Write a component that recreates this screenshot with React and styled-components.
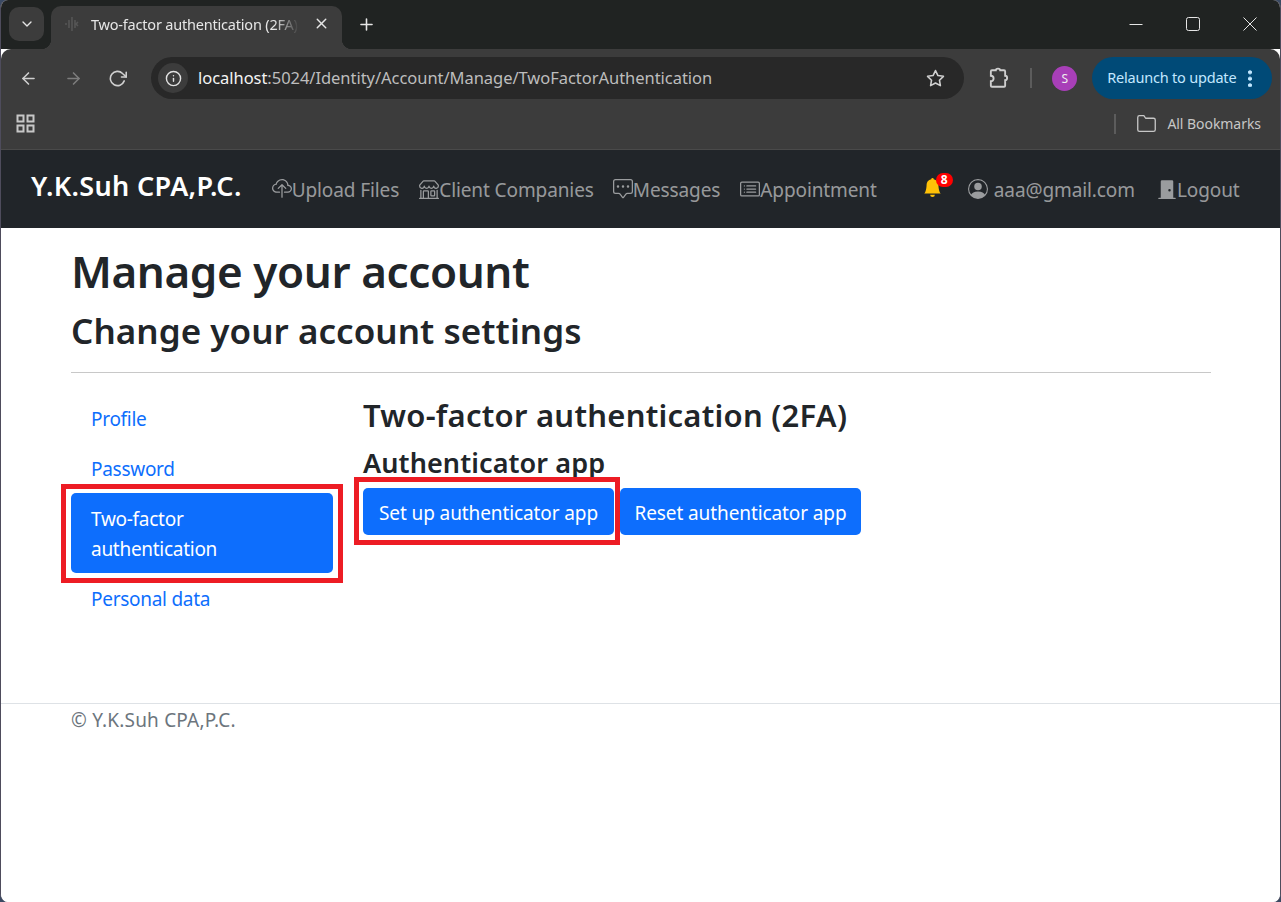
import React from "react";
import styled, { createGlobalStyle } from "styled-components";
import { FiArrowLeft, FiArrowRight, FiRotateCw, FiX, FiPlus, FiChevronDown, FiStar, FiFolder, FiInfo } from "react-icons/fi";
import { BsCloudUpload, BsShop, BsChatSquareDots, BsCardList, BsBellFill, BsPersonCircle, BsDoorClosedFill } from "react-icons/bs";

const GlobalStyle = createGlobalStyle`
  html, body { margin: 0; padding: 0; background: #3a4a63; }
  body { font-family: "Noto Sans", "Open Sans", sans-serif; }
  * { box-sizing: border-box; }
`;

const WindowFrame = styled.div`
  width: 1281px;
  height: 902px;
  background: #fff;
  border-radius: 8px;
  overflow: hidden;
  display: flex;
  flex-direction: column;
  border-left: 1px solid #4e4c5c;
  border-right: 1px solid #4e4c5c;
`;

const TabStrip = styled.div`
  height: 49px;
  flex: none;
  background: #202322;
  display: flex;
  align-items: flex-start;
  color: #e6e6e6;
  padding: 7px 0 0 8px;
`;

const TabSearch = styled.div`
  width: 35px;
  height: 34px;
  background: #3c3c3c;
  border-radius: 10px;
  display: flex;
  align-items: center;
  justify-content: center;
  font-size: 16px;
  margin-right: 7px;
`;

const Tab = styled.div`
  position: relative;
  width: 291px;
  height: 43px;
  margin-top: -1px;
  background: #3c3c3c;
  border-radius: 10px 10px 0 0;
  display: flex;
  align-items: center;
  padding: 0 12px 8px 12px;
  font-size: 14.5px;
  letter-spacing: -0.2px;
  white-space: nowrap;
  &::before,
  &::after {
    content: "";
    position: absolute;
    bottom: 0;
    width: 10px;
    height: 10px;
  }
  &::before {
    left: -10px;
    background: radial-gradient(circle at 0 0, transparent 10px, #3c3c3c 10.5px);
  }
  &::after {
    right: -10px;
    background: radial-gradient(circle at 100% 0, transparent 10px, #3c3c3c 10.5px);
  }
`;

const TabFavicon = styled.svg`
  flex: none;
  margin-right: 10px;
`;

const TabTitle = styled.span`
  width: 208px;
  overflow: hidden;
  -webkit-mask-image: linear-gradient(to right, #000 88%, transparent 100%);
  mask-image: linear-gradient(to right, #000 88%, transparent 100%);
`;

const TabClose = styled.span`
  display: flex;
  margin-left: auto;
  font-size: 17px;
`;

const NewTab = styled.div`
  display: flex;
  margin: 8px 0 0 15px;
  font-size: 19px;
`;

const WindowControls = styled.div`
  margin-left: auto;
  display: flex;
  gap: 43px;
  align-items: center;
  padding-right: 23px;
  height: 34px;
`;

const Toolbar = styled.div`
  height: 58px;
  flex: none;
  background: #3c3c3c;
  border-radius: 10px 10px 0 0;
  display: flex;
  align-items: center;
  color: #c7c7c7;
  padding: 0 8px 0 18px;
`;

const NavIcon = styled.span`
  display: flex;
  font-size: 19px;
  margin-right: 25.5px;
  color: ${(p) => (p.$dim ? "#7d7d7d" : "#cfcfcf")};
`;

const Omnibox = styled.div`
  width: 814px;
  height: 42px;
  margin-left: -1.5px;
  background: #282828;
  border-radius: 21px;
  display: flex;
  align-items: center;
  padding: 0 19px 0 7px;
  font-size: 16.5px;
  letter-spacing: -0.04px;
  color: #bdbdbd;
  white-space: nowrap;
`;

const InfoBadge = styled.span`
  width: 30px;
  height: 30px;
  border-radius: 50%;
  background: #3c3c3c;
  display: flex;
  align-items: center;
  justify-content: center;
  color: #e2e2e2;
  font-size: 17px;
  margin-right: 10px;
`;

const Address = styled.span`
  margin-top: -2px;
`;

const Host = styled.span`
  color: #f4f4f4;
`;

const StarIcon = styled.span`
  margin-left: auto;
  display: flex;
  font-size: 19px;
  color: #d0d0d0;
`;

const ExtensionIcon = styled.svg`
  flex: none;
  margin-left: 23px;
`;

const Divider = styled.span`
  width: 2px;
  background: #5c5c5c;
  height: ${(p) => p.$height}px;
  margin: ${(p) => p.$margin};
  flex: none;
`;

const Avatar = styled.span`
  width: 25px;
  height: 25px;
  border-radius: 50%;
  background: #a83fb8;
  color: #eee;
  font-size: 12px;
  display: flex;
  align-items: center;
  justify-content: center;
`;

const RelaunchPill = styled.div`
  margin-left: 15px;
  width: 180px;
  height: 42px;
  border-radius: 21px;
  background: #004a77;
  color: #c2e7ff;
  display: flex;
  align-items: center;
  padding: 0 0 0 15px;
  font-size: 14.5px;
  letter-spacing: -0.2px;
  white-space: nowrap;
`;

const RelaunchLabel = styled.span`
  margin-top: -2px;
`;

const KebabDots = styled.span`
  margin-left: 12px;
  width: 4px;
  height: 18px;
  background: radial-gradient(circle at center, #c2e7ff 1.7px, transparent 2.2px) 0 0 / 4px 6.5px repeat-y;
`;

const BookmarksBar = styled.div`
  height: 43px;
  flex: none;
  background: #3c3c3c;
  display: flex;
  align-items: center;
  color: #c7c7c7;
  padding: 0 19px 9px 15px;
  border-bottom: 1px solid #4a4a4a;
  font-size: 14px;
  letter-spacing: -0.05px;
`;

const BookmarkLabel = styled.span`
  margin-left: 10px;
`;

const SiteNav = styled.nav`
  height: 78px;
  flex: none;
  background: #212529;
  display: flex;
  align-items: center;
  padding: 2px 0 0 30px;
  color: rgba(255, 255, 255, 0.55);
  font-size: 19px;
`;

const Brand = styled.a`
  color: #fff;
  font-size: 27px;
  font-weight: 600;
  margin: -10px 30px 0 0;
  letter-spacing: 0.33px;
  white-space: nowrap;
`;

const NavLink = styled.a`
  display: flex;
  align-items: center;
  white-space: nowrap;
  margin-right: ${(p) => p.$gap ?? 20}px;
  letter-spacing: -0.1px;
  svg {
    font-size: 20px;
    margin-top: -3px;
    flex: none;
  }
`;

const UserIcon = styled(BsPersonCircle)`
  margin-right: 6px;
`;

const BellWrap = styled.span`
  position: relative;
  display: flex;
  color: #ffc107;
  font-size: 19px;
  margin: -6px 26px 0 46px;
`;

const CountBadge = styled.span`
  position: absolute;
  top: -5px;
  left: 13px;
  width: 17px;
  height: 14px;
  border-radius: 7px;
  background: #f00;
  color: #fff;
  font-size: 12px;
  font-weight: 700;
  line-height: 14px;
  text-align: center;
`;

const Main = styled.main`
  flex: 1;
  padding: 0 70px;
  background: #fff;
  color: #212529;
  display: flex;
  flex-direction: column;
`;

const PageTitle = styled.h1`
  font-size: 44px;
  font-weight: 600;
  line-height: 60px;
  margin: 13px 0 0;
  letter-spacing: -0.4px;
`;

const PageSubtitle = styled.h2`
  font-size: 35px;
  font-weight: 600;
  line-height: 48px;
  margin: 6px 0 17px;
  letter-spacing: 0.05px;
`;

const Rule = styled.hr`
  border: 0;
  border-top: 1px solid #c8c8c8;
  margin: 0 0 20px;
  width: 1140px;
`;

const Columns = styled.div`
  display: flex;
`;

const SideNav = styled.ul`
  list-style: none;
  margin: 0;
  padding: 0;
  width: 262px;
  flex: none;
  margin-right: 30px;
`;

const SideItem = styled.li`
  position: relative;
  padding: 11px 20px 9px;
  font-size: 19px;
  line-height: 30px;
  letter-spacing: -0.28px;
  border-radius: 5px;
  color: ${(p) => (p.$active ? "#fff" : "#0d6efd")};
  background: ${(p) => (p.$active ? "#0d6efd" : "transparent")};
`;

const Panel = styled.div`
  flex: 1;
  padding-top: 1px;
`;

const PanelTitle = styled.h3`
  font-size: 31px;
  font-weight: 600;
  line-height: 42px;
  margin: 0 0 8px;
  letter-spacing: 0.25px;
`;

const PanelSubtitle = styled.h4`
  font-size: 27px;
  font-weight: 600;
  line-height: 38px;
  margin: 0 0 6px;
  letter-spacing: 0.1px;
`;

const ButtonRow = styled.div`
  display: flex;
  gap: 6px;
`;

const Button = styled.button`
  position: relative;
  width: ${(p) => p.$width}px;
  height: 47px;
  padding: 2px 0 0;
  border: 0;
  border-radius: 5px;
  background: #0d6efd;
  color: #fff;
  font-family: inherit;
  font-size: 19px;
  letter-spacing: -0.1px;
  white-space: nowrap;
`;

const Highlight = styled.span`
  position: absolute;
  inset: ${(p) => p.$inset};
  border: 5px solid #ed1c24;
  pointer-events: none;
`;

const Footer = styled.footer`
  height: 199px;
  flex: none;
  background: #fff;
  border-top: 1px solid #dee2e6;
  padding: 3px 0 0 70px;
  font-size: 19px;
  letter-spacing: 0.2px;
  color: #6c757d;
`;

export default function App() {
  return (
    <WindowFrame>
      <GlobalStyle />
      <TabStrip>
        <TabSearch>
          <FiChevronDown />
        </TabSearch>
        <Tab>
          <TabFavicon width="18" height="18" viewBox="0 0 18 18" stroke="#555" strokeWidth="1.6" fill="none">
            <path d="M2 9h2M6 5v8M9 2v14M12 5v8M15 7l-2 2 2 2" />
          </TabFavicon>
          <TabTitle>Two-factor authentication (2FA)</TabTitle>
          <TabClose>
            <FiX />
          </TabClose>
        </Tab>
        <NewTab>
          <FiPlus />
        </NewTab>
        <WindowControls>
          <svg width="14" height="14" viewBox="0 0 14 14" stroke="#e6e6e6" fill="none">
            <path d="M0.5 7.5h13" />
          </svg>
          <svg width="14" height="14" viewBox="0 0 14 14" stroke="#e6e6e6" fill="none">
            <rect x="0.5" y="0.5" width="13" height="13" rx="2" />
          </svg>
          <svg width="14" height="14" viewBox="0 0 14 14" stroke="#e6e6e6" fill="none">
            <path d="M0.5 0.5l13 13M13.5 0.5l-13 13" />
          </svg>
        </WindowControls>
      </TabStrip>
      <Toolbar>
        <NavIcon>
          <FiArrowLeft />
        </NavIcon>
        <NavIcon $dim>
          <FiArrowRight />
        </NavIcon>
        <NavIcon>
          <FiRotateCw />
        </NavIcon>
        <Omnibox>
          <InfoBadge>
            <FiInfo />
          </InfoBadge>
          <Address>
            <Host>localhost</Host>:5024/Identity/Account/Manage/TwoFactorAuthentication
          </Address>
          <StarIcon>
            <FiStar />
          </StarIcon>
        </Omnibox>
        <ExtensionIcon width="22" height="22" viewBox="0 0 20 20" fill="none" stroke="#cfcfcf" strokeWidth="1.7">
          <path d="M4.5 3H8a2 1.5 0 0 1 4 0h3.5a1 1 0 0 1 1 1v4a1.8 2 0 0 1 0 4v5a1 1 0 0 1-1 1h-11a1 1 0 0 1-1-1v-4a2.5 2.5 0 0 0 0-5V4a1 1 0 0 1 1-1z" />
        </ExtensionIcon>
        <Divider $height={20} $margin="0 20px 0 21px" />
        <Avatar>S</Avatar>
        <RelaunchPill>
          <RelaunchLabel>Relaunch to update</RelaunchLabel>
          <KebabDots />
        </RelaunchPill>
      </Toolbar>
      <BookmarksBar>
        <svg width="19" height="19" viewBox="0 0 19 19" fill="none" stroke="#c7c7c7" strokeWidth="2">
          <rect x="1.5" y="1.5" width="6" height="6" />
          <rect x="11.5" y="1.5" width="6" height="6" />
          <rect x="1.5" y="11.5" width="6" height="6" />
          <rect x="11.5" y="11.5" width="6" height="6" />
        </svg>
        <Divider $height={20} $margin="0 20px 0 auto" />
        <FiFolder size={21} strokeWidth={1.5} />
        <BookmarkLabel>All Bookmarks</BookmarkLabel>
      </BookmarksBar>
      <SiteNav>
        <Brand>Y.K.Suh CPA,P.C.</Brand>
        <NavLink>
          <BsCloudUpload />
          Upload Files
        </NavLink>
        <NavLink $gap={19}>
          <BsShop />
          Client Companies
        </NavLink>
        <NavLink>
          <BsChatSquareDots />
          Messages
        </NavLink>
        <NavLink $gap={0}>
          <BsCardList />
          Appointment
        </NavLink>
        <BellWrap>
          <BsBellFill />
          <CountBadge>8</CountBadge>
        </BellWrap>
        <NavLink $gap={22}>
          <UserIcon />
          aaa@gmail.com
        </NavLink>
        <NavLink $gap={0}>
          <BsDoorClosedFill />
          Logout
        </NavLink>
      </SiteNav>
      <Main>
        <PageTitle>Manage your account</PageTitle>
        <PageSubtitle>Change your account settings</PageSubtitle>
        <Rule />
        <Columns>
          <SideNav>
            <SideItem>Profile</SideItem>
            <SideItem>Password</SideItem>
            <SideItem $active>
              Two-factor
              <br />
              authentication
              <Highlight $inset="-9px -10px -10px" />
            </SideItem>
            <SideItem>Personal data</SideItem>
          </SideNav>
          <Panel>
            <PanelTitle>Two-factor authentication (2FA)</PanelTitle>
            <PanelSubtitle>Authenticator app</PanelSubtitle>
            <ButtonRow>
              <Button $width={251}>
                Set up authenticator app
                <Highlight $inset="-11px -6px -10px -9px" />
              </Button>
              <Button $width={241}>Reset authenticator app</Button>
            </ButtonRow>
          </Panel>
        </Columns>
      </Main>
      <Footer>© Y.K.Suh CPA,P.C.</Footer>
    </WindowFrame>
  );
}
